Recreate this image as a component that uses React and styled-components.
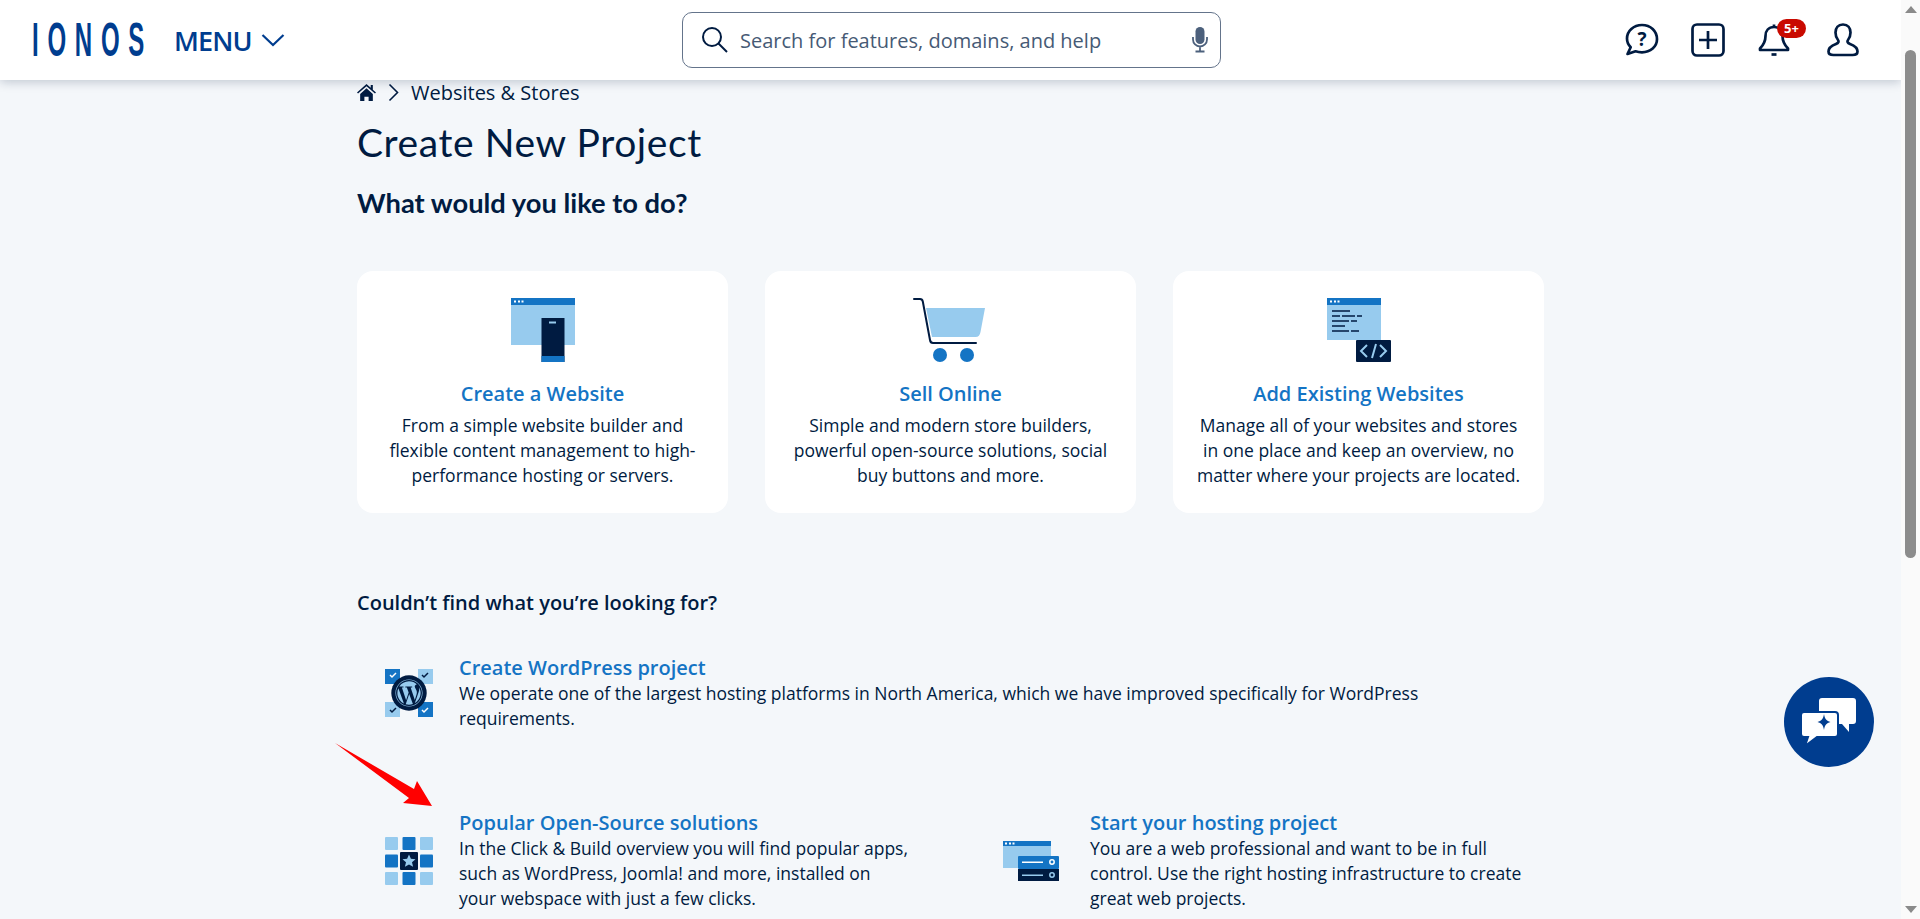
import React from "react";
import styled, { createGlobalStyle } from "styled-components";
import { FaWordpress } from "react-icons/fa";

const Global = createGlobalStyle`
  html, body { margin: 0; padding: 0; height: 919px; overflow: hidden; background: #f4f7fa; }
  * { box-sizing: border-box; }
  body { font-family: "Open Sans", "Liberation Sans", sans-serif; color: #001b41; }
`;

const Shell = styled.div`
  display: flex;
  width: 1920px;
  height: 919px;
  overflow: hidden;
`;
const Main = styled.div`
  position: relative;
  width: 1901px;
  height: 919px;
  overflow: hidden;
  background: #f4f7fa;
`;
const Rail = styled.div`
  width: 19px;
  height: 919px;
  background: #fafafa;
  display: flex;
  flex-direction: column;
  align-items: center;
  padding: 6px 0;
`;
const RailArrow = styled.div`
  width: 0;
  height: 0;
  margin-top: ${p => (p.$down ? "auto" : 0)};
  border-left: 6px solid transparent;
  border-right: 6px solid transparent;
  border-bottom: ${p => (p.$down ? 0 : "7px solid #8a8a8a")};
  border-top: ${p => (p.$down ? "7px solid #8a8a8a" : 0)};
`;
const RailThumb = styled.div`
  margin-top: 37px;
  width: 11px;
  height: 508px;
  background: #8c8c8c;
  border-radius: 6px;
`;

const Header = styled.header`
  height: 80px;
  background: #fff;
  box-shadow: 0 2px 10px rgba(0, 27, 65, 0.22);
  display: grid;
  grid-template-columns: 650px 539px 1fr;
  align-items: center;
  position: relative;
  z-index: 2;
  padding: 0 41px 0 32px;
`;
const Left = styled.div`
  display: flex;
  align-items: center;
  gap: 31px;
`;
const Logo = styled.div`
  font-family: "Liberation Sans", sans-serif;
  color: #003d8f;
  font-size: 48px;
  line-height: 48px;
  font-weight: 700;
  letter-spacing: 17.500px;
  white-space: nowrap;
  width: 111px;
  transform: scaleX(0.5);
  transform-origin: left center;
`;
const MenuBtn = styled.div`
  display: flex;
  align-items: center;
  gap: 9px;
  color: #003d8f;
  font-size: 27px;
  font-weight: 600;
  letter-spacing: -0.9px;
`;
const Search = styled.div`
  height: 56px;
  border: 1px solid #64748b;
  border-radius: 10px;
  display: flex;
  align-items: center;
  padding: 0 12px 0 18px;
  background: #fff;
`;
const SearchText = styled.span`
  flex: 1;
  margin-left: 11px;
  font-size: 20px;
  color: #465a75;
`;
const Actions = styled.div`
  display: flex;
  justify-content: flex-end;
  align-items: center;
  gap: 32px;
`;
const IconWrap = styled.div`
  position: relative;
  width: 34px;
  height: 34px;
  margin-left: ${p => p.$ml || 0}px;
`;
const Badge = styled.span`
  position: absolute;
  top: -4px;
  left: 20px;
  height: 19px;
  width: 29px;
  border-radius: 10px;
  background: #c90a00;
  color: #fff;
  font-size: 13px;
  font-weight: 700;
  line-height: 19px;
  text-align: center;
`;

const Content = styled.main`
  width: 1187px;
  margin-left: 357px;
`;
const Crumb = styled.div`
  display: flex;
  align-items: center;
  height: 24px;
  font-size: 20px;
  gap: 12px;
`;
const Title = styled.h1`
  margin: 14px 0 0;
  font-family: "Lato", "Open Sans", sans-serif;
  font-weight: 400;
  font-size: 39px;
  line-height: 48px;
  letter-spacing: 0.6px;
`;
const Sub = styled.h2`
  margin: 19px 0 0;
  font-family: "Lato", "Open Sans", sans-serif;
  font-weight: 700;
  font-size: 27.3px;
  line-height: 36px;
`;
const Cards = styled.div`
  display: grid;
  grid-template-columns: repeat(3, 371px);
  gap: 37px;
  margin-top: 50px;
`;
const Card = styled.div`
  height: 242px;
  background: #fff;
  border-radius: 16px;
  display: flex;
  flex-direction: column;
  align-items: center;
  padding: 27px 21px 0;
  text-align: center;
`;
const CardIcon = styled.div`
  height: 64px;
  margin-bottom: 18px;
`;
const CardTitle = styled.div`
  color: #1474c4;
  font-size: 20px;
  font-weight: 600;
  line-height: 28px;
`;
const CardText = styled.div`
  font-size: 17.5px;
  line-height: 25px;
  margin-top: 5px;
`;
const Lead = styled.div`
  margin-top: 77px;
  font-size: 20px;
  font-weight: 600;
  line-height: 26px;
`;
const Feature = styled.div`
  display: flex;
  gap: ${p => p.$gap}px;
  align-items: center;
  padding-left: 28px;
`;
const FeatureBody = styled.div`
  flex: 1;
  max-width: ${p => p.$max};
`;
const FeatureTitle = styled.div`
  color: #1474c4;
  font-size: 20px;
  font-weight: 600;
  line-height: 26px;
`;
const FeatureText = styled.div`
  font-size: 17.5px;
  line-height: 25px;
`;
const FeatureIcon = styled.div`
  display: flex;
  flex: none;
  width: ${p => p.$w}px;
`;
const FirstRow = styled.div`
  margin-top: 39px;
`;
const SecondRow = styled.div`
  margin-top: 79px;
  display: grid;
  grid-template-columns: 618px 1fr;
`;
const Arrow = styled.svg`
  position: absolute;
  left: 335px;
  top: 743px;
`;
const Fab = styled.div`
  position: absolute;
  left: 1784px;
  top: 677px;
  width: 90px;
  height: 90px;
  border-radius: 50%;
  background: #003d8f;
  display: flex;
  align-items: center;
  justify-content: center;
`;

const navy = "#001b41", blue = "#1474c4", light = "#97cbee", brand = "#003d8f";

const Home = () => (
  <svg width="19" height="17" viewBox="0 0 18 16"><path fill={navy} d="M9 0 0 8l1 1 8-7 8 7 1-1-3-2.700V1h-2v2.500zM3 9.500 9 4l6 5.500V16h-4v-4H7v4H3z"/></svg>
);
const Chevron = () => (
  <svg width="11" height="19" viewBox="0 0 11 19"><path fill="none" stroke={navy} strokeWidth="1.600" d="M1.500 1.500 9.500 9.500 1.500 17.500"/></svg>
);
const SearchIcon = () => (
  <svg width="28" height="28" viewBox="0 0 28 28"><circle cx="11" cy="11" r="9" fill="none" stroke={navy} strokeWidth="2"/><path d="m17.500 17.500 8.500 8.500" stroke={navy} strokeWidth="2"/></svg>
);
const Mic = () => (
  <svg width="16" height="26" viewBox="0 0 16 26"><rect x="3.500" y="0" width="9" height="17" rx="4.500" fill="#4c607c"/><path d="M1 10v2.500a7 7 0 0 0 14 0V10M8 19.500V24M3.500 24.500h9" fill="none" stroke="#4c607c" strokeWidth="1.800"/></svg>
);
const Help = () => (
  <svg width="34" height="34" viewBox="0 0 34 34"><path fill="none" stroke={navy} strokeWidth="2.700" strokeLinejoin="round" d="M17 2C8.500 2 2 8 2 15.500c0 3.500 1.300 6.300 3.700 8.700L2.500 31l8-2.700c2 .7 4 1 6.500 1 8.500 0 15-5.800 15-13C32 8 25.500 2 17 2z"/><text x="17" y="22.500" textAnchor="middle" fontFamily="Open Sans" fontWeight="700" fontSize="19" fill={navy}>?</text></svg>
);
const Plus = () => (
  <svg width="34" height="34" viewBox="0 0 34 34"><rect x="1.500" y="1.500" width="31" height="31" rx="4.500" fill="none" stroke={navy} strokeWidth="2.700"/><path d="M17 8v18M8 17h18" stroke={navy} strokeWidth="2.700"/></svg>
);
const Bell = () => (
  <svg width="34" height="34" viewBox="0 0 34 34"><path fill="none" stroke={navy} strokeWidth="2.700" strokeLinejoin="round" d="M17 4c-5.500 0-8.500 4-8.500 9 0 5-1.500 8.500-5.500 12.500v1.500h28v-1.500c-4-4-5.500-7.500-5.500-12.500 0-5-3-9-8.500-9zM17 1.500V4"/><path d="M14.500 31.500h5" stroke={navy} strokeWidth="2.700"/></svg>
);
const User = () => (
  <svg width="34" height="34" viewBox="0 0 34 34"><path fill="none" stroke={navy} strokeWidth="2.700" strokeLinejoin="round" d="M17 1.500c-5 0-7.500 3.500-7.500 8 0 3 .8 5.500 2.500 7.500 1.200 1.500.5 3-2 4-4 1.500-7.500 3.500-7.500 7.500 0 2.500 2 3.500 5 3.500h19c3 0 5-1 5-3.500 0-4-3.500-6-7.500-7.500-2.500-1-3.200-2.500-2-4 1.700-2 2.500-4.500 2.500-7.500 0-4.500-2.500-8-7.500-8z"/></svg>
);
const Dots = ({ x, y, c = "#fff" }) => (
  <g fill={c}><rect x={x} y={y} width="2" height="2"/><rect x={x + 4} y={y} width="2" height="2"/><rect x={x + 7.500} y={y} width="2" height="2"/></g>
);
const SiteIcon = () => (
  <svg width="64" height="64" viewBox="0 0 64 64"><rect width="64" height="47" fill={light}/><rect width="64" height="7" fill={blue}/><Dots x={3} y={2.500}/><rect x="30.500" y="20" width="23" height="44" fill={navy}/><rect x="30.500" y="58" width="23" height="6" fill={blue}/><rect x="38" y="23.500" width="7" height="2" fill={light}/></svg>
);
const CartIcon = () => (
  <svg width="76" height="64" viewBox="0 0 76 64"><path fill={light} d="M13 10h59l-4.500 24c-.5 3-2 5-5 5H19z"/><path fill="none" stroke={navy} strokeWidth="2" strokeLinecap="round" d="M1 1h6c1.500 0 2.500 1 2.800 2.500L17 42c.3 2 1 3 3 3h43"/><circle cx="27" cy="57" r="7" fill={blue}/><circle cx="54" cy="57" r="7" fill={blue}/></svg>
);
const CodeIcon = () => (
  <svg width="64" height="64" viewBox="0 0 64 64"><rect width="54" height="42" fill={light}/><rect width="54" height="7" fill={blue}/><Dots x={3} y={2.500}/><g stroke={navy} strokeWidth="1.500"><path d="M5 13h18M5 18h8M15 18h13M30 18h5M5 23h17M24 23h6M5 28h13M5 33h17M24 33h8"/></g><rect x="29" y="42" width="35" height="22" rx="1" fill={navy}/><path d="M40 47l-6 6 6 6M53 47l6 6-6 6M49 46l-4 14" fill="none" stroke={light} strokeWidth="2"/></svg>
);
const Check = ({ x, y, c }) => (
  <path d={`M${x} ${y + 2} l2 2 4-4`} fill="none" stroke={c} strokeWidth="1.500"/>
);
const WpIcon = () => (
  <svg width="48" height="48" viewBox="0 0 48 48"><rect width="15" height="15" fill={blue}/><rect x="33" width="15" height="15" fill={light}/><rect y="33" width="15" height="15" fill={light}/><rect x="33" y="33" width="15" height="15" fill={blue}/><Check x={5} y={4} c="#fff"/><Check x={37} y={4} c={navy}/><Check x={5} y={39} c={navy}/><Check x={37} y={39} c="#fff"/><circle cx="24" cy="24" r="17.700" fill={navy}/><FaWordpress x="10" y="10" size="28" color={light}/></svg>
);
const AppsIcon = () => {
  const s = 13;
  const cells = [[0,0,light],[17.500,0,blue],[35,0,light],[0,17.500,blue],[35,17.500,blue],[0,35,light],[17.500,35,blue],[35,35,light]];
  return (
    <svg width="48" height="48" viewBox="0 0 48 48">
      {cells.map(([x, y, c], i) => <rect key={i} x={x} y={y} width={s} height={s} rx="1" fill={c}/>)}
      <rect x="15" y="15" width="18" height="18" rx="1" fill={navy}/>
      <path fill={light} d="m24 17.500 1.900 4.300 4.600.4-3.500 3 1.100 4.600-4.100-2.400-4.100 2.400 1.100-4.600-3.500-3 4.600-.4z"/>
    </svg>
  );
};
const HostIcon = () => (
  <svg width="56" height="40" viewBox="0 0 56 40"><rect width="48" height="27" fill={light}/><rect width="48" height="5" fill={blue}/><Dots x={2} y={1.500}/><rect x="15" y="15" width="41" height="13" rx="1" fill={blue}/><rect x="15" y="28" width="41" height="12" fill={navy}/><rect x="19" y="20.500" width="21" height="1.500" fill="#fff"/><rect x="19" y="33.500" width="21" height="1.500" fill={light}/><circle cx="49" cy="21" r="2.200" fill="none" stroke="#fff" strokeWidth="1.500"/><circle cx="49" cy="34" r="2.200" fill="none" stroke={light} strokeWidth="1.500"/></svg>
);

export default function App() {
  return (
    <Shell>
      <Global />
      <Main>
        <Header>
          <Left>
            <Logo>IONOS</Logo>
            <MenuBtn>
              MENU
              <svg width="24" height="14" viewBox="0 0 24 14"><path d="M1.500 2 12 12 22.500 2" fill="none" stroke={brand} strokeWidth="2.200"/></svg>
            </MenuBtn>
          </Left>
          <Search>
            <SearchIcon />
            <SearchText>Search for features, domains, and help</SearchText>
            <Mic />
          </Search>
          <Actions>
            <IconWrap><Help /></IconWrap>
            <IconWrap><Plus /></IconWrap>
            <IconWrap><Bell /><Badge>5+</Badge></IconWrap>
            <IconWrap $ml={3}><User /></IconWrap>
          </Actions>
        </Header>
        <Content>
          <Crumb><Home /><Chevron /><span>Websites &amp; Stores</span></Crumb>
          <Title>Create New Project</Title>
          <Sub>What would you like to do?</Sub>
          <Cards>
            <Card>
              <CardIcon><SiteIcon /></CardIcon>
              <CardTitle>Create a Website</CardTitle>
              <CardText>From a simple website builder and flexible content management to high-performance hosting or servers.</CardText>
            </Card>
            <Card>
              <CardIcon><CartIcon /></CardIcon>
              <CardTitle>Sell Online</CardTitle>
              <CardText>Simple and modern store builders, powerful open-source solutions, social buy buttons and more.</CardText>
            </Card>
            <Card>
              <CardIcon><CodeIcon /></CardIcon>
              <CardTitle>Add Existing Websites</CardTitle>
              <CardText>Manage all of your websites and stores in one place and keep an overview, no matter where your projects are located.</CardText>
            </Card>
          </Cards>
          <Lead>Couldn’t find what you’re looking for?</Lead>
          <FirstRow>
            <Feature $gap={26}>
              <FeatureIcon $w={48}><WpIcon /></FeatureIcon>
              <FeatureBody $max="1000px">
                <FeatureTitle>Create WordPress project</FeatureTitle>
                <FeatureText>We operate one of the largest hosting platforms in North America, which we have improved specifically for WordPress requirements.</FeatureText>
              </FeatureBody>
            </Feature>
          </FirstRow>
          <SecondRow>
            <Feature $gap={26}>
              <FeatureIcon $w={48}><AppsIcon /></FeatureIcon>
              <FeatureBody $max="451px">
                <FeatureTitle>Popular Open-Source solutions</FeatureTitle>
                <FeatureText>In the Click &amp; Build overview you will find popular apps, such as WordPress, Joomla! and more, installed on your webspace with just a few clicks.</FeatureText>
              </FeatureBody>
            </Feature>
            <Feature $gap={31}>
              <FeatureIcon $w={56}><HostIcon /></FeatureIcon>
              <FeatureBody>
                <FeatureTitle>Start your hosting project</FeatureTitle>
                <FeatureText>You are a web professional and want to be in full control. Use the right hosting infrastructure to create great web projects.</FeatureText>
              </FeatureBody>
            </Feature>
          </SecondRow>
        </Content>
        <Arrow width="98" height="64" viewBox="0 0 98 64"><path fill="#ff0000" d="M0 0 79 46 82 38 97 63 68 60 74 55z"/></Arrow>
        <Fab>
          <svg width="56" height="50" viewBox="0 0 56 50">
            <path fill="#fff" d="M21 1h31a3 3 0 0 1 3 3v20a3 3 0 0 1-3 3h-4v8l-7-8H21a3 3 0 0 1-3-3V4a3 3 0 0 1 3-3z"/>
            <path fill="#fff" stroke={brand} strokeWidth="2" d="M3 15h31a3 3 0 0 1 3 3v19a3 3 0 0 1-3 3H16L4 49l3-9H3a3 3 0 0 1-3-3V18a3 3 0 0 1 3-3z"/>
            <path fill={brand} d="M23 17c.8 5 2.500 7 6.500 8-4 1-5.700 3-6.500 8-.8-5-2.500-7-6.500-8 4-1 5.700-3 6.500-8z"/>
          </svg>
        </Fab>
      </Main>
      <Rail><RailArrow /><RailThumb /><RailArrow $down /></Rail>
    </Shell>
  );
}
